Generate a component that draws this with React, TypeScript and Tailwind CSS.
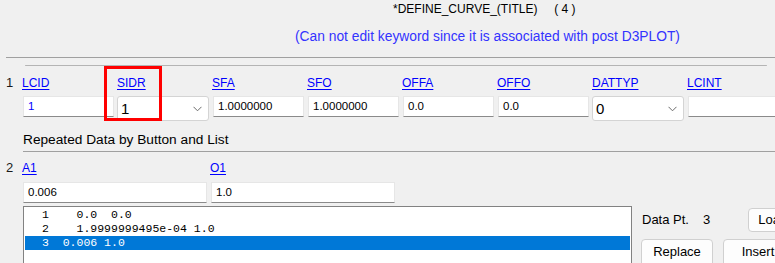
import React from "react";

const F = { fontFamily: '"Liberation Sans", Arial, sans-serif' };

function Label({ text }: { text: string }) {
  return (
    <div className="h-[18px] flex items-center text-[12px] text-[#0000ff] underline underline-offset-2">
      {text}
    </div>
  );
}

function TextInput({ value, w, blue }: { value: string; w: string; blue?: boolean }) {
  return (
    <div
      className={`${w} ml-[1px] mt-[1px] h-[21px] bg-white border border-[#e6e6e6] border-b-[#8a8a8a] flex items-center pl-[4px] text-[11.5px] ${blue ? "text-[#0000ff]" : "text-black"}`}
    >
      {value}
    </div>
  );
}

function SelectBox({ value }: { value: string }) {
  return (
    <div className="w-[92px] h-[25px] bg-white border border-[#d4d4d4] rounded-[3px] flex items-center justify-between pl-[3px] pr-[6px]">
      <span className="text-[15px] text-black leading-none">{value}</span>
      <svg width="9" height="6" viewBox="0 0 9 6">
        <path d="M0.5 0.8 L4.5 4.8 L8.5 0.8" fill="none" stroke="#6b6b6b" strokeWidth="1" />
      </svg>
    </div>
  );
}

const cols: { name: string; value: string; sel?: boolean; blue?: boolean }[] = [
  { name: "LCID", value: "1", blue: true },
  { name: "SIDR", value: "1", sel: true },
  { name: "SFA", value: "1.0000000" },
  { name: "SFO", value: "1.0000000" },
  { name: "OFFA", value: "0.0" },
  { name: "OFFO", value: "0.0" },
  { name: "DATTYP", value: "0", sel: true },
  { name: "LCINT", value: "" },
];

export default function App() {
  return (
    <div className="w-[775px] h-[263px] overflow-hidden bg-[#f0f0f0] relative" style={F}>
      <div className="h-[17px] flex items-center pl-[393px] text-[12px] text-black whitespace-pre">
        {"*DEFINE_CURVE_(TITLE)     ( 4 )"}
      </div>
      <div className="h-[40px] flex items-center pl-[295px] text-[13.8px] text-[#3333ff] whitespace-nowrap">
        (Can not edit keyword since it is associated with post D3PLOT)
      </div>
      <div className="ml-[6px] border-t border-[#a0a0a0]" />
      <div className="ml-[25px] mr-[8px] mt-[7px] border-t border-[#b4b4b4] rounded-full" />

      {/* Row 1 */}
      <div className="flex pt-[8px]">
        <div className="w-[22px] shrink-0 pl-[6px] h-[18px] flex items-center text-[13px] text-[#1a1a1a]">1</div>
        <div className="flex shrink-0">
          {cols.map((c) => (
            <div key={c.name} className="w-[95px] shrink-0 relative">
              <Label text={c.name} />
              <div className="mt-[4px]">
                {c.sel ? <SelectBox value={c.value} /> : <TextInput value={c.value} w="w-[91px]" blue={c.blue} />}
              </div>
              {c.name === "SIDR" && (
                <div className="absolute left-[-13px] top-[-8px] w-[58px] h-[55px] border-[3px] border-[#ff0000]" />
              )}
            </div>
          ))}
        </div>
      </div>

      {/* Repeated data header */}
      <div className="ml-[23px] h-[31px] border-b border-[#a0a0a0] flex items-end pb-[3px] text-[13.7px] text-black leading-[16px]">
        Repeated Data by Button and List
      </div>

      {/* Row 2 */}
      <div className="flex pt-[7px]">
        <div className="w-[22px] shrink-0 pl-[6px] h-[18px] flex items-center text-[13px] text-[#1a1a1a]">2</div>
        <div className="flex flex-col shrink-0">
          <div className="flex">
            <div className="w-[188px]">
              <Label text="A1" />
            </div>
            <div className="w-[188px]">
              <Label text="O1" />
            </div>
          </div>
          <div className="flex mt-[4px]">
            <div className="w-[188px]">
              <TextInput value="0.006" w="w-[184px]" />
            </div>
            <div className="w-[188px]">
              <TextInput value="1.0" w="w-[184px]" />
            </div>
          </div>
          <div className="flex mt-[3px]">
            <div
              className="ml-[1px] w-[609px] h-[70px] shrink-0 bg-white border border-[#828282] pt-[1px] px-[1px] text-[11.5px] leading-[14px] whitespace-pre"
              style={{ fontFamily: '"Liberation Mono", "Courier New", monospace' }}
            >
              <div className="h-[14px] pl-[17px] text-black">{"1    0.0  0.0"}</div>
              <div className="h-[14px] pl-[17px] text-black">{"2    1.9999999495e-04 1.0"}</div>
              <div className="h-[14px] pl-[17px] bg-[#0078d7] text-white">{"3  0.006 1.0"}</div>
            </div>
            <div className="ml-[9px] pt-[2px] flex flex-col shrink-0">
              <div className="flex items-center h-[24px]">
                <span className="pl-[1px] text-[13px] text-black">Data Pt.</span>
                <span className="ml-[14px] text-[13px] text-black">3</span>
                <div className="ml-[38px] w-[60px] h-[24px] bg-[#fdfdfd] border border-[#d0d0d0] rounded-[4px] flex items-center pl-[9px] text-[13px] text-black">
                  Load
                </div>
              </div>
              <div className="flex mt-[7px]">
                <div className="w-[72px] h-[28px] bg-[#fdfdfd] border border-[#d0d0d0] rounded-[4px] flex items-center justify-center text-[13px] text-black pb-[2px]">
                  Replace
                </div>
                <div className="ml-[10px] w-[70px] h-[28px] bg-[#fdfdfd] border border-[#d0d0d0] rounded-[4px] flex items-center justify-center text-[13px] text-black pb-[2px]">
                  Insert
                </div>
              </div>
            </div>
          </div>
        </div>
      </div>
    </div>
  );
}
